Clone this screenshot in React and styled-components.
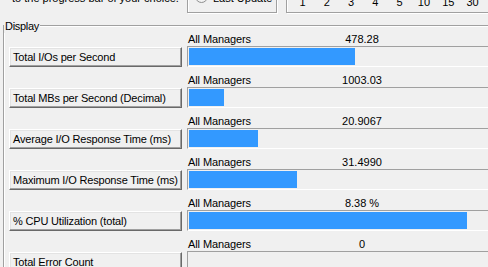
import React from "react";
import styled, { createGlobalStyle } from "styled-components";

const GlobalStyle = createGlobalStyle`
  html, body {
    margin: 0;
    padding: 0;
    background: #f0f0f0;
    overflow: hidden;
  }
  body {
    font-family: "Liberation Sans", Arial, sans-serif;
    font-size: 11px;
    color: #000;
  }
  #root {
    width: 488px;
    height: 267px;
    overflow: hidden;
  }
`;

const Page = styled.div`
  width: 488px;
  height: 267px;
  overflow: hidden;
  background: #f0f0f0;
  display: flex;
  flex-direction: column;
`;

const TopStrip = styled.div`
  flex: none;
  height: 14px;
  display: flex;
  align-items: flex-end;
  overflow: hidden;
`;

const Instruction = styled.div`
  flex: none;
  width: 175px;
  padding-left: 12px;
  align-self: flex-start;
  margin-top: -8px;
  line-height: 13px;
  white-space: nowrap;
`;

const EtchedBox = styled.div`
  flex: none;
  box-sizing: border-box;
  height: 26px;
  margin-bottom: 1px;
  margin-left: ${(p) => p.$gap || 0}px;
  width: ${(p) => p.$width}px;
  border: 1px solid #a0a0a0;
  box-shadow: inset 1px 1px 0 #fff, 1px 1px 0 #fff;
  display: flex;
  align-items: flex-end;
  padding: ${(p) => p.$pad};
`;

const RadioRow = styled.div`
  display: flex;
  align-items: flex-end;
  line-height: 13px;
  white-space: nowrap;
`;

const Radio = styled.span`
  flex: none;
  box-sizing: border-box;
  width: 13px;
  height: 13px;
  border-radius: 50%;
  border: 1px solid #8e8f8f;
  background: radial-gradient(circle at 50% 60%, #fafafa 0%, #e6e6e6 100%);
  margin: 0 5px 2px 0;
`;

const Ticks = styled.div`
  display: flex;
  line-height: 13px;
`;

const Tick = styled.span`
  flex: none;
  width: 24.3px;
  text-align: center;
`;

const DisplayGroup = styled.div`
  flex: 1;
  position: relative;
  margin: 11px 0 0 3px;
  width: 500px;
  box-sizing: border-box;
  border-top: 1px solid #a0a0a0;
  border-left: 1px solid #a0a0a0;
  box-shadow: inset 1px 1px 0 #fff;
  padding: 7px 0 0 5px;
  display: flex;
  flex-direction: column;
`;

const Legend = styled.span`
  position: absolute;
  top: -6px;
  left: 0;
  padding: 0 1px;
  line-height: 13px;
  letter-spacing: -0.3px;
  background: #f0f0f0;
`;

const Row = styled.div`
  flex: none;
  height: 41px;
  display: grid;
  grid-template-columns: 173px 1fr;
  grid-template-rows: 13px 21px;
  column-gap: 5px;
`;

const InfoLine = styled.div`
  grid-column: 2;
  grid-row: 1;
  display: flex;
  line-height: 13px;
  white-space: nowrap;
`;

const Manager = styled.span`
  flex: none;
  width: 119px;
  padding-left: 1px;
  letter-spacing: -0.1px;
`;

const Value = styled.span`
  flex: none;
  width: 110px;
  text-align: center;
`;

const MetricButton = styled.button`
  grid-column: 1;
  grid-row: 2;
  margin: 1px 0 0 0;
  height: 20px;
  box-sizing: border-box;
  padding: 0 3px 1px;
  text-align: left;
  font-family: "Liberation Sans", Arial, sans-serif;
  font-size: 11px;
  letter-spacing: -0.17px;
  color: #000;
  background: #f0f0f0;
  border: 1px solid;
  border-color: #fff #696969 #696969 #fff;
  box-shadow: inset -1px -1px 0 #a0a0a0, inset 1px 1px 0 #e3e3e3;
  white-space: nowrap;
  overflow: hidden;
`;

const Track = styled.div`
  grid-column: 2;
  grid-row: 2;
  width: 320px;
  height: 21px;
  box-sizing: border-box;
  border: 1px solid;
  border-color: #a0a0a0 #fff #fff #a0a0a0;
  padding: 1px;
`;

const Fill = styled.div`
  height: 100%;
  background: #3399ff;
`;

const rows = [
  { name: "Total I/Os per Second", value: "478.28", fill: 166 },
  { name: "Total MBs per Second (Decimal)", value: "1003.03", fill: 35 },
  { name: "Average I/O Response Time (ms)", value: "20.9067", fill: 69 },
  { name: "Maximum I/O Response Time (ms)", value: "31.4990", fill: 108 },
  { name: "% CPU Utilization (total)", value: "8.38 %", fill: 278 },
  { name: "Total Error Count", value: "0", fill: 0 },
];

const ticks = ["1", "2", "3", "4", "5", "10", "15", "30"];

export default function App() {
  return (
    <Page>
      <GlobalStyle />
      <TopStrip>
        <Instruction>to the progress bar of your choice.</Instruction>
        <EtchedBox $width={90} $pad="0 0 7px 7px">
          <RadioRow>
            <Radio />
            <span>Last Update</span>
          </RadioRow>
        </EtchedBox>
        <EtchedBox $width={300} $gap={9} $pad="0 0 3px 3.35px">
          <Ticks>
            {ticks.map((t) => (
              <Tick key={t}>{t}</Tick>
            ))}
          </Ticks>
        </EtchedBox>
      </TopStrip>
      <DisplayGroup>
        <Legend>Display</Legend>
        {rows.map((r) => (
          <Row key={r.name}>
            <InfoLine>
              <Manager>All Managers</Manager>
              <Value>{r.value}</Value>
            </InfoLine>
            <MetricButton type="button">{r.name}</MetricButton>
            <Track>
              <Fill style={{ width: `${r.fill}px` }} />
            </Track>
          </Row>
        ))}
      </DisplayGroup>
    </Page>
  );
}
